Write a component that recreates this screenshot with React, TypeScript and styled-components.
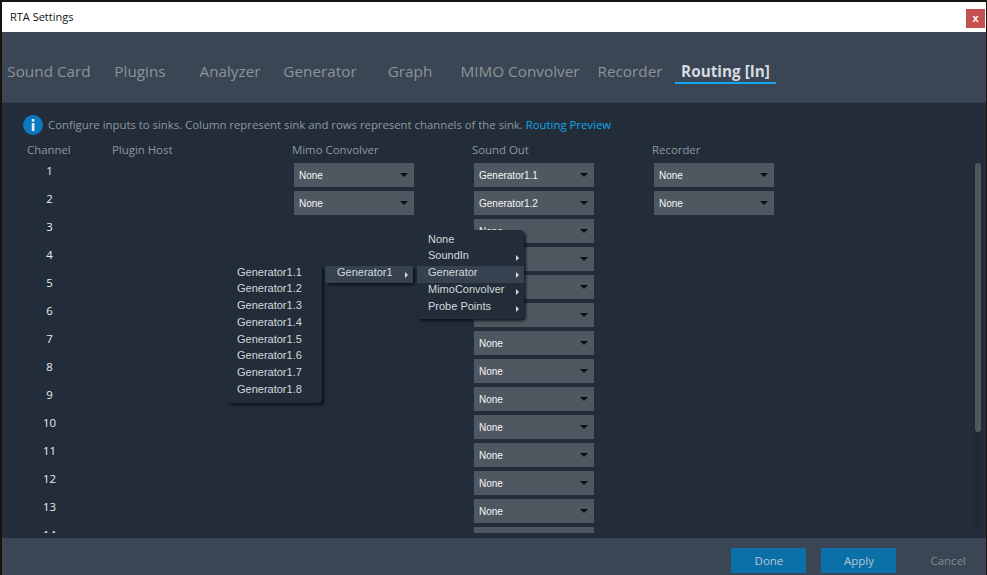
import React from 'react';
import styled, { createGlobalStyle } from 'styled-components';

const GlobalStyle = createGlobalStyle`
  html, body { margin: 0; padding: 0; background: #16120e; }
  body { width: 987px; height: 575px; overflow: hidden; }
`;

const ui = `"Open Sans", "Noto Sans", sans-serif`;
const arial = `"Liberation Sans", Arial, sans-serif`;

const Window = styled.div`
  width: 984px;
  height: 573px;
  margin: 2px 0 0 2px;
  display: flex;
  flex-direction: column;
  background: #222d39;
  font-family: ${ui};
  overflow: hidden;
`;

const TitleBar = styled.div`
  height: 30px;
  flex: none;
  box-sizing: border-box;
  background: #fff;
  display: flex;
  align-items: center;
  justify-content: space-between;
  padding: 0 1px 1px 8px;
  color: #111;
  font-size: 11px;
`;

const CloseButton = styled.button`
  width: 19px;
  height: 19px;
  margin-top: 4px;
  border: 0;
  padding: 0 0 2px;
  background: #c45050;
  color: #fff;
  font: bold 11px ${arial};
`;

const TabBar = styled.div`
  height: 71px;
  flex: none;
  background: #3a4653;
  border-bottom: 1px solid #313c48;
  box-sizing: border-box;
  display: flex;
  align-items: flex-start;
  padding: 26px 0 0 1px;
`;

const Tab = styled.div<{ $w: number; $active?: boolean }>`
  width: ${p => p.$w}px;
  height: 26px;
  box-sizing: border-box;
  text-align: center;
  white-space: nowrap;
  font-size: 15.3px;
  line-height: 26px;
  font-weight: ${p => (p.$active ? 700 : 400)};
  color: ${p => (p.$active ? '#d6dbe0' : '#8d9499')};
  border-bottom: ${p => (p.$active ? '2px solid #14a5ec' : '2px solid transparent')};
`;

const Content = styled.div`
  position: relative;
  flex: 1;
  min-height: 0;
  display: flex;
  flex-direction: column;
  padding: 12px 0 5px 21px;
`;

const InfoRow = styled.div`
  height: 20px;
  flex: none;
  margin-bottom: 7px;
  display: flex;
  align-items: flex-start;
  gap: 5px;
  font-size: 11.35px;
  line-height: 20px;
  color: #8f979e;
`;

const InfoIcon = styled.svg`
  width: 20px;
  height: 20px;
  flex: none;
`;

const Link = styled.span`
  color: #14a5ec;
`;

const Table = styled.div`
  flex: 1;
  min-height: 0;
  overflow: hidden;
  padding-left: 4px;
`;

const Grid = styled.div`
  display: grid;
  grid-template-columns: 85px 180px 180px 180px 180px;
`;

const Heading = styled.div`
  height: 21px;
  font-size: 11.4px;
  line-height: 15px;
  color: #8f979e;
`;

const ChannelCell = styled.div`
  height: 28px;
  width: 45px;
  text-align: center;
  font-size: 11.4px;
  line-height: 16px;
  color: #e8edf0;
`;

const Cell = styled.div`
  height: 28px;
  padding-left: 2px;
`;

const Select = styled.div`
  width: 120px;
  height: 24px;
  box-sizing: border-box;
  padding: 0 5px;
  background: #4f5860;
  display: flex;
  align-items: center;
  justify-content: space-between;
  color: #f4f6f7;
  font: 10px ${arial};
`;

const Caret = styled.span`
  width: 0;
  height: 0;
  margin-right: 1px;
  border-left: 4px solid transparent;
  border-right: 4px solid transparent;
  border-top: 4px solid #0c0f12;
`;

const ScrollTrack = styled.div`
  position: absolute;
  right: 4px;
  top: 60px;
  width: 8px;
  height: 365px;
  border-radius: 4px;
  background: #1f2a35;
`;

const ScrollThumb = styled.div`
  width: 6px;
  height: 269px;
  margin-left: 1px;
  border-radius: 3px;
  background: #4f5860;
`;

const Menu = styled.div<{ $x: number; $y: number; $w: number; $pad: string }>`
  position: absolute;
  left: ${p => p.$x}px;
  top: ${p => p.$y}px;
  width: ${p => p.$w}px;
  padding: ${p => p.$pad};
  box-sizing: content-box;
  border-radius: 0 4px 4px 4px;
  background: #222d39;
  box-shadow: 2px 2px 3px rgba(5, 8, 12, 0.75);
  font: 11px ${arial};
  color: #d4d8db;
`;

const MenuItem = styled.div<{ $indent: number; $active?: boolean }>`
  height: 16.8px;
  line-height: 13px;
  padding: 0 5px 0 ${p => p.$indent}px;
  display: flex;
  align-items: flex-start;
  justify-content: space-between;
  background: ${p => (p.$active ? '#36424f' : 'transparent')};
`;

const SubArrow = styled.span`
  width: 0;
  height: 0;
  margin-top: 6px;
  border-top: 3px solid transparent;
  border-bottom: 3px solid transparent;
  border-left: 3px solid #d4d8db;
`;

const Footer = styled.div`
  height: 37px;
  flex: none;
  background: #3a4653;
  display: flex;
  align-items: flex-start;
  justify-content: flex-end;
  padding: 10px 20px 0 0;
  box-sizing: border-box;
`;

const Button = styled.button<{ $ghost?: boolean }>`
  width: ${p => (p.$ghost ? 'auto' : '75px')};
  height: 25px;
  margin-left: ${p => (p.$ghost ? '34px' : '15px')};
  border: 0;
  padding: 0;
  background: ${p => (p.$ghost ? 'transparent' : '#0b6fa8')};
  color: ${p => (p.$ghost ? '#838b92' : '#b7c6d1')};
  font: 11.5px ${ui};
`;

const tabs = [
  { label: 'Sound Card', w: 92 },
  { label: 'Plugins', w: 90 },
  { label: 'Analyzer', w: 90 },
  { label: 'Generator', w: 90 },
  { label: 'Graph', w: 90 },
  { label: 'MIMO Convolver', w: 130 },
  { label: 'Recorder', w: 90 },
  { label: 'Routing [In]', w: 101, active: true },
];

const rows = Array.from({ length: 15 }, (_, i) => i + 1);
const generators = Array.from({ length: 8 }, (_, i) => `Generator1.${i + 1}`);

const Dropdown = ({ value }: { value: string }) => (
  <Select>
    {value}
    <Caret />
  </Select>
);

export default function App() {
  return (
    <>
      <GlobalStyle />
      <Window>
        <TitleBar>
          RTA Settings
          <CloseButton>x</CloseButton>
        </TitleBar>
        <TabBar>
          {tabs.map(t => (
            <Tab key={t.label} $w={t.w} $active={t.active}>
              {t.label}
            </Tab>
          ))}
        </TabBar>
        <Content>
          <InfoRow>
            <InfoIcon viewBox="0 0 20 20">
              <circle cx="10" cy="10" r="10" fill="#0b78bf" />
              <rect x="8.8" y="4" width="2.6" height="2.6" fill="#e8f2f8" />
              <rect x="8.8" y="8" width="2.6" height="8" fill="#e8f2f8" />
            </InfoIcon>
            <span>
              Configure inputs to sinks. Column represent sink and rows represent channels of the sink. <Link>Routing Preview</Link>
            </span>
          </InfoRow>
          <Table>
            <Grid>
              <Heading>Channel</Heading>
              <Heading>Plugin Host</Heading>
              <Heading>Mimo Convolver</Heading>
              <Heading>Sound Out</Heading>
              <Heading>Recorder</Heading>
              {rows.map(n => (
                <React.Fragment key={n}>
                  <ChannelCell>{n}</ChannelCell>
                  <Cell />
                  <Cell>{n <= 2 && <Dropdown value="None" />}</Cell>
                  <Cell>
                    <Dropdown value={n <= 2 ? `Generator1.${n}` : 'None'} />
                  </Cell>
                  <Cell>{n <= 2 && <Dropdown value="None" />}</Cell>
                </React.Fragment>
              ))}
            </Grid>
          </Table>
          <ScrollTrack>
            <ScrollThumb />
          </ScrollTrack>
          <Menu $x={415} $y={127} $w={107} $pad="2.5px 0">
            <MenuItem $indent={11}>None</MenuItem>
            <MenuItem $indent={11}>SoundIn<SubArrow /></MenuItem>
            <MenuItem $indent={11} $active>Generator<SubArrow /></MenuItem>
            <MenuItem $indent={11}>MimoConvolver<SubArrow /></MenuItem>
            <MenuItem $indent={11}>Probe Points<SubArrow /></MenuItem>
          </Menu>
          <Menu $x={323} $y={163} $w={88} $pad="0">
            <MenuItem $indent={12} $active>Generator1<SubArrow /></MenuItem>
          </Menu>
          <Menu $x={225} $y={162} $w={95} $pad="0.5px 0 3.5px">
            {generators.map(g => (
              <MenuItem key={g} $indent={10}>{g}</MenuItem>
            ))}
          </Menu>
        </Content>
        <Footer>
          <Button>Done</Button>
          <Button>Apply</Button>
          <Button $ghost>Cancel</Button>
        </Footer>
      </Window>
    </>
  );
}
